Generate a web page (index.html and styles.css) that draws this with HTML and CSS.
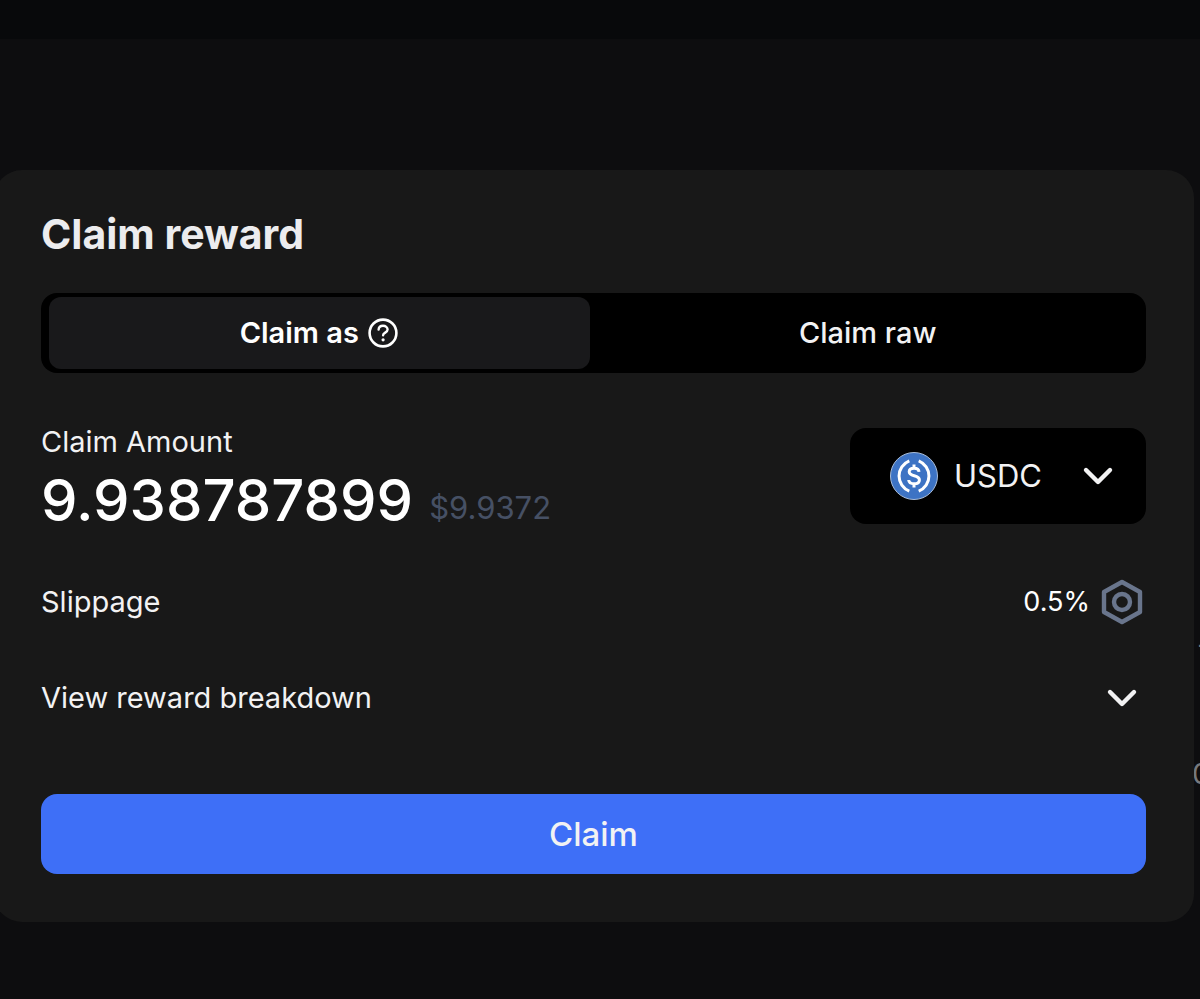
FILE: index.html
```html
<!DOCTYPE html>
<html lang="en">
<head>
<meta charset="utf-8">
<meta name="viewport" content="width=device-width, initial-scale=1">
<title>Claim reward</title>
<link rel="stylesheet" href="styles.css">
</head>
<body>
<header class="topbar"></header>
<main class="page">
  <span class="axis-label axis-dash" aria-hidden="true">-</span>
  <span class="axis-label axis-zero" aria-hidden="true">0</span>
  <section class="card" aria-labelledby="title">
    <h1 class="title" id="title">Claim reward</h1>
    <div class="tabs" role="tablist">
      <button class="tab tab-active" type="button" role="tab" aria-selected="true">Claim as
        <svg class="help" viewBox="0 0 32 32" fill="none" stroke="currentColor" stroke-width="2.6" stroke-linecap="round" stroke-linejoin="round" aria-hidden="true"><circle cx="16" cy="16" r="13.4"/><path stroke-width="2.4" d="M11.6 12.6C11.8 10 13.6 8.8 16 8.8C18.6 8.8 20.6 10.3 20.6 12.6C20.6 15.6 16.1 15.6 16.1 18.2"/><circle cx="16.1" cy="22.8" r="1.6" fill="currentColor" stroke="none"/></svg>
      </button>
      <button class="tab" type="button" role="tab" aria-selected="false">Claim raw</button>
    </div>
    <div class="amount-row">
      <div class="amount">
        <p class="label">Claim Amount</p>
        <p class="figures"><span class="value">9.938787899</span><span class="fiat">$9.9372</span></p>
      </div>
      <div class="token">
        <select class="token-select" aria-label="Token"><option>USDC</option></select>
        <svg class="token-logo" viewBox="0 0 48 48" fill="none" stroke="#fff" stroke-linecap="butt" aria-hidden="true"><circle cx="24" cy="24" r="23.5" fill="#3d73c4" stroke="#a9bdd9" stroke-width="1"/><path stroke-width="3" d="M19.3 8.8A16.4 16.4 0 0 0 19.3 39.2M28.7 8.8A16.4 16.4 0 0 1 28.7 39.2"/><path stroke-width="3" d="M29 19.8C28.8 17.4 27 16.2 24.1 16.2C21.2 16.2 19.2 17.5 19.2 19.8C19.2 25.2 29.4 22.2 29.4 28C29.4 30.5 27.2 31.8 24.2 31.8C20.9 31.8 18.9 30.5 18.7 28M24 12.5V16M24 32V35.5"/></svg>
        <svg class="chevron token-chevron" viewBox="0 0 32 32" aria-hidden="true"><path d="M4 10L16 22L28 10"/></svg>
      </div>
    </div>
    <div class="row slippage">
      <p>Slippage</p>
      <div class="slippage-value">
        <span class="percent">0.5%</span>
        <button class="icon-button" type="button" aria-label="Slippage settings">
          <svg class="nut" viewBox="0 0 48 48" fill="none" stroke="#69758c" stroke-width="4.4" stroke-linejoin="round" aria-hidden="true"><path d="M24 4L42 14V34L24 44L6 34V14Z"/><circle cx="24" cy="24" r="8"/></svg>
        </button>
      </div>
    </div>
    <button class="row breakdown" type="button">View reward breakdown
      <svg class="chevron" viewBox="0 0 32 32" aria-hidden="true"><path d="M4 10L16 22L28 10"/></svg>
    </button>
    <button class="claim" type="button">Claim</button>
  </section>
</main>
</body>
</html>
```
FILE: styles.css
```css
* { box-sizing: border-box; }
body {
  margin: 0;
  min-height: 100vh;
  background: #0d0d0f;
  color: #f2f2f3;
  font-family: Inter, "Liberation Sans", sans-serif;
  font-size: 29px;
  line-height: 32px;
}
h1, p { margin: 0; }
button, select {
  border: 0;
  padding: 0;
  background: none;
  color: inherit;
  font: inherit;
  cursor: pointer;
}
svg { display: block; flex: none; }
.topbar { height: 39px; background: #08090b; }
.page { position: relative; padding-top: 131px; overflow: hidden; }
.card {
  position: relative;
  margin: 0 6px 0 -6px;
  padding: 40px 48px 48px 47px;
  border-radius: 28px;
  background: #181818;
}
.title { font-size: 41px; font-weight: 700; line-height: 48px; color: #ececee; }
.tabs {
  display: grid;
  grid-template-columns: 1fr 1fr;
  gap: 8px;
  margin-top: 35px;
  padding: 4px 8px;
  border-radius: 16px;
  background: #000;
}
.tab {
  display: flex;
  align-items: center;
  justify-content: center;
  gap: 8px;
  height: 72px;
  border-radius: 12px;
  font-weight: 500;
}
.tab-active { background: #19191b; color: #fff; font-weight: 600; }
.help { width: 32px; height: 32px; }
.amount-row {
  display: flex;
  align-items: flex-start;
  justify-content: space-between;
  margin-top: 55px;
}
.label { line-height: 28px; }
.figures { display: flex; align-items: flex-end; gap: 16px; margin-top: 20px; }
.value { font-size: 58px; font-weight: 500; line-height: 48px; color: #fff; }
.fiat { font-size: 31px; line-height: 32px; color: #465064; }
.token { position: relative; width: 296px; }
.token-select {
  display: block;
  width: 100%;
  height: 96px;
  padding-left: 104px;
  border-radius: 16px;
  background: #000;
  font-size: 31px;
  appearance: none;
}
.token-logo { position: absolute; top: 24px; left: 40px; width: 48px; height: 48px; pointer-events: none; }
.chevron {
  width: 32px;
  height: 32px;
  fill: none;
  stroke: currentColor;
  stroke-width: 4.4;
  stroke-linecap: round;
  stroke-linejoin: round;
}
.token-chevron { position: absolute; top: 32px; right: 32px; pointer-events: none; }
.row { display: flex; align-items: center; justify-content: space-between; width: 100%; height: 48px; }
.slippage { margin-top: 54px; }
.slippage-value { display: flex; align-items: center; gap: 8px; }
.percent { font-size: 27px; color: #fff; }
.nut { width: 48px; height: 48px; }
.breakdown { margin-top: 48px; padding-right: 8px; text-align: left; }
.claim {
  display: block;
  width: 100%;
  height: 80px;
  margin-top: 72px;
  border-radius: 16px;
  background: #3e6ff7;
  font-size: 33px;
  font-weight: 500;
}
.axis-label { position: absolute; left: 100%; color: #77797d; }
.axis-dash { top: 590px; margin-left: -3px; }
.axis-zero { top: 719px; margin-left: -8px; }
```
